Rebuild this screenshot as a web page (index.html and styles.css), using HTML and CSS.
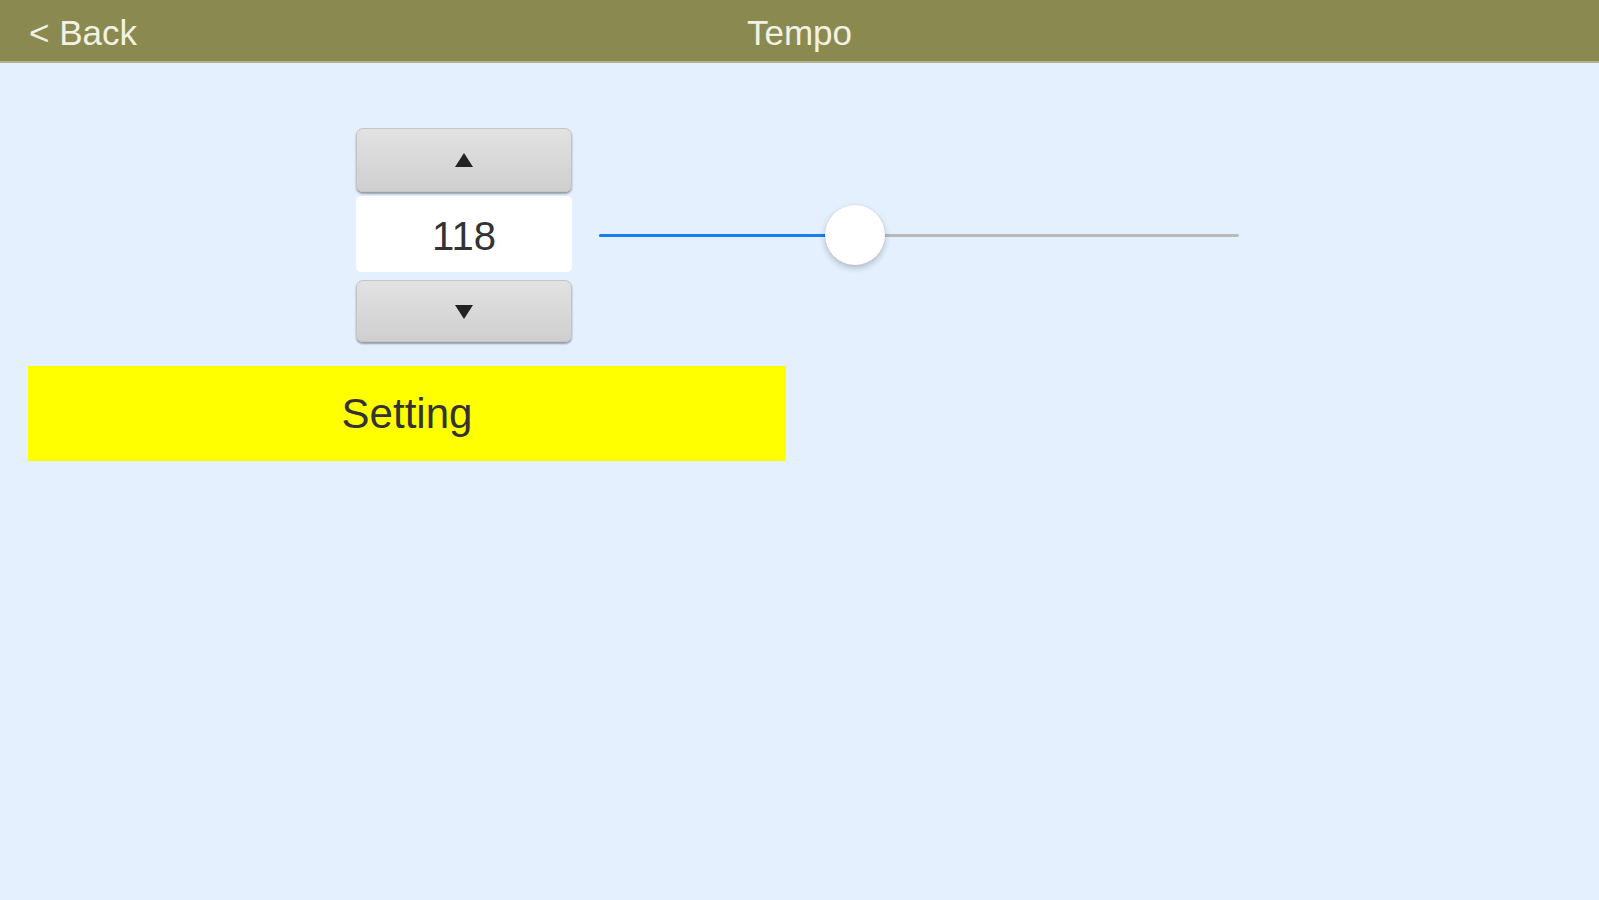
FILE: index.html
```html
<!DOCTYPE html>
<html lang="en">
<head>
<meta charset="utf-8">
<title>Tempo</title>
<link rel="stylesheet" href="styles.css">
</head>
<body>
<header class="navbar">
  <div class="nav-back">&lt; Back</div>
  <div class="nav-title">Tempo</div>
  <div class="nav-spacer"></div>
</header>
<main class="content">
  <div class="tempo-row">
    <div class="stepper">
      <button class="step-btn step-up" type="button">
        <svg width="20" height="16" viewBox="0 0 20 16"><polygon points="10,1 19,15 1,15" fill="#222"/></svg>
      </button>
      <div class="step-value">118</div>
      <button class="step-btn step-down" type="button">
        <svg width="20" height="16" viewBox="0 0 20 16"><polygon points="1,1 19,1 10,15" fill="#222"/></svg>
      </button>
    </div>
    <div class="slider">
      <div class="track">
        <div class="track-fill" style="width:40%"></div>
        <div class="thumb" style="left:40%"></div>
      </div>
    </div>
  </div>
  <button class="setting-btn" type="button">Setting</button>
</main>
</body>
</html>
```
FILE: styles.css
```css
* { box-sizing: border-box; }
html, body { margin: 0; padding: 0; }
body {
  width: 1599px;
  height: 900px;
  background: #e4f0fe;
  font-family: "Liberation Sans", Arial, sans-serif;
  overflow: hidden;
}
.navbar {
  height: 63px;
  background: #8a8a50;
  border-bottom: 2px solid #b4b48c;
  display: grid;
  grid-template-columns: 1fr auto 1fr;
  align-items: center;
  padding: 5px 29px 0 29px;
  color: #f2f2e4;
  font-size: 35px;
}
.nav-back { justify-self: start; }
.nav-title { text-align: center; }
.content {
  padding: 65px 0 0 28px;
  display: flex;
  flex-direction: column;
  align-items: flex-start;
  gap: 24px;
}
.tempo-row {
  display: flex;
  align-items: center;
  margin-left: 328px;
  gap: 27px;
}
.stepper {
  width: 216px;
  display: flex;
  flex-direction: column;
  gap: 4px;
}
.step-btn {
  height: 64px;
  border: 1px solid #c4c4c4;
  border-radius: 7px;
  background: linear-gradient(#e2e2e2, #cfcfcf);
  box-shadow: 0 2px 2px rgba(0,0,0,0.35);
  display: flex;
  align-items: center;
  justify-content: center;
  padding: 0;
}
.step-down { height: 62px; margin-top: 4px; }
.step-up svg { margin-top: 0; }
.step-down svg { margin-top: 2px; }
.step-value {
  height: 76px;
  padding-top: 4px;
  background: #ffffff;
  border-radius: 5px;
  display: flex;
  align-items: center;
  justify-content: center;
  font-size: 40px;
  color: #333333;
}
.slider {
  width: 640px;
  height: 62px;
  display: flex;
  align-items: center;
}
.track {
  position: relative;
  width: 100%;
  height: 3px;
  border-radius: 2px;
  background: #b9b9b9;
}
.track-fill {
  height: 100%;
  border-radius: 2px;
  background: #1a7bf2;
}
.thumb {
  position: absolute;
  top: 50%;
  width: 60px;
  height: 60px;
  margin-left: -30px;
  margin-top: -30px;
  border-radius: 50%;
  background: #ffffff;
  box-shadow: 0 3px 6px rgba(0,0,0,0.22), 0 0 1px rgba(0,0,0,0.15);
}
.setting-btn {
  width: 758px;
  height: 95px;
  border: none;
  background: #ffff00;
  font-family: "Liberation Sans", Arial, sans-serif;
  font-size: 42px;
  color: #333333;
  padding: 0;
}
```
